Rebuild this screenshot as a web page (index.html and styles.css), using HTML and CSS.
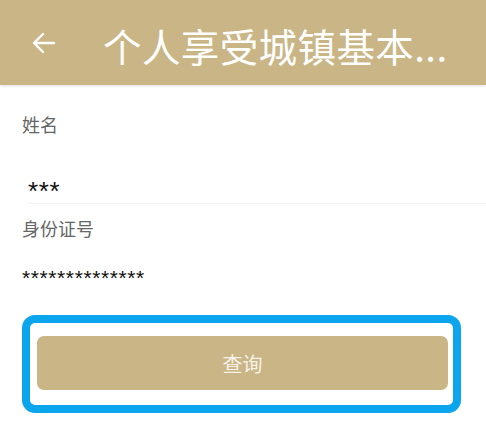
FILE: index.html
```html
<!DOCTYPE html>
<html lang="zh">
<head>
<meta charset="utf-8">
<link rel="stylesheet" href="styles.css">
</head>
<body>
<header class="topbar">
  <span class="back">
    <svg width="24" height="22" viewBox="0 0 24 22"><path d="M22 11H3M11 2L2 11l9 9" fill="none" stroke="#fff" stroke-width="2.4" stroke-linecap="round" stroke-linejoin="round"/></svg>
  </span>
  <h1 class="title">个人享受城镇基本...</h1>
</header>
<main class="form">
  <div class="label label-name">姓名</div>
  <div class="input input-name">***</div>
  <div class="label label-id">身份证号</div>
  <div class="input input-id">**************</div>
  <div class="outline">
    <div class="btn">查询</div>
  </div>
</main>
</body>
</html>
```
FILE: styles.css
```css
html, body {
  margin: 0;
  padding: 0;
  background: #fff;
  font-family: "Noto Sans CJK SC", "Noto Sans", sans-serif;
}
.topbar {
  height: 85px;
  background: #c9b585;
  display: flex;
  align-items: center;
  box-shadow: 0 1px 3px rgba(0,0,0,0.12);
}
.back {
  display: flex;
  width: 24px;
  height: 22px;
  margin-left: 32px;
}
.title {
  margin: 0 0 0 47px;
  font-size: 38.5px;
  font-weight: 400;
  color: #fff;
  line-height: 50px;
  letter-spacing: 0.4px;
  white-space: nowrap;
  padding-top: 4px;
}
.form {
  padding: 0 0 0 22px;
}
.label {
  font-size: 18px;
  line-height: 24px;
  color: #666;
}
.label-name {
  margin-top: 27px;
}
.input {
  font-family: "Liberation Sans", sans-serif;
  color: #111;
}
.input-name {
  margin-top: 40px;
  margin-left: 6px;
  font-size: 26px;
  line-height: 30px;
  height: 27px;
  border-bottom: 1px solid #f1f1f1;
  letter-spacing: 0.6px;
}
.label-id {
  margin-top: 11.5px;
}
.input-id {
  margin-top: 26px;
  font-size: 21px;
  line-height: 24px;
  letter-spacing: 0.6px;
}
.outline {
  box-sizing: border-box;
  margin-top: 25.5px;
  width: 439px;
  border: 8px solid #0aa5ec;
  border-radius: 13px;
  padding: 13px 5px 15px 7px;
}
.btn {
  height: 54px;
  background: #c9b585;
  border-radius: 7px;
  color: #f7f2e8;
  font-size: 20px;
  display: flex;
  align-items: center;
  justify-content: center;
}
```
